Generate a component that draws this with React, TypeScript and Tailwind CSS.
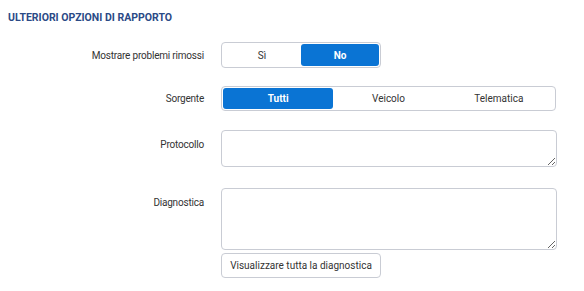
import React from 'react';

const Segmented = ({ options, active, width }: { options: string[]; active: string; width: string }) => (
  <div className={`flex ${width} p-[1px] rounded-[4px] border border-[#c9ccd4] bg-white`}>
    {options.map((o) => (
      <button
        key={o}
        className={`flex-1 rounded-[3px] text-[10px] ${
          o === active ? 'bg-[#0a74d4] text-white font-bold' : 'text-[#333] bg-transparent'
        }`}
      >
        {o}
      </button>
    ))}
  </div>
);

export default function App() {
  return (
    <div className="w-[584px] h-[291px] bg-white font-['Roboto',sans-serif] text-[#333]">
      <h2 className="pl-2 pt-[11px] text-[10.5px] font-bold uppercase text-[#2b4a86] leading-[13px]">
        Ulteriori opzioni di rapporto
      </h2>
      <div className="mt-[18px] flex flex-col">
        <div className="flex items-center">
          <label className="w-[205px] pr-[1px] text-right text-[10px] tracking-[-0.2px]">Mostrare problemi rimossi</label>
          <div className="pl-4">
            <Segmented options={['Sì', 'No']} active="No" width="w-[160px] h-[26px]" />
          </div>
        </div>
        <div className="mt-[18px] flex items-center">
          <label className="w-[205px] pr-[1px] text-right text-[10px] tracking-[-0.2px]">Sorgente</label>
          <div className="pl-4">
            <Segmented options={['Tutti', 'Veicolo', 'Telematica']} active="Tutti" width="w-[335px] h-[25px]" />
          </div>
        </div>
        <div className="mt-[19px] flex items-start">
          <label className="w-[205px] pr-[1px] pt-[7px] text-right text-[10px] tracking-[-0.2px]">Protocollo</label>
          <div className="pl-4">
            <textarea className="block w-[336px] h-[37px] rounded-[4px] border border-[#c9ccd4] resize-y" />
          </div>
        </div>
        <div className="mt-[21px] flex items-start">
          <label className="w-[205px] pr-[1px] pt-[7px] text-right text-[10px] tracking-[-0.2px]">Diagnostica</label>
          <div className="pl-4 flex flex-col gap-[3px]">
            <textarea className="block w-[336px] h-[62px] rounded-[4px] border border-[#c9ccd4] resize-y" />
            <button className="w-[160px] h-[25px] rounded-[4px] border border-[#c9ccd4] bg-white text-[10px] text-[#333]">
              Visualizzare tutta la diagnostica
            </button>
          </div>
        </div>
      </div>
    </div>
  );
}
